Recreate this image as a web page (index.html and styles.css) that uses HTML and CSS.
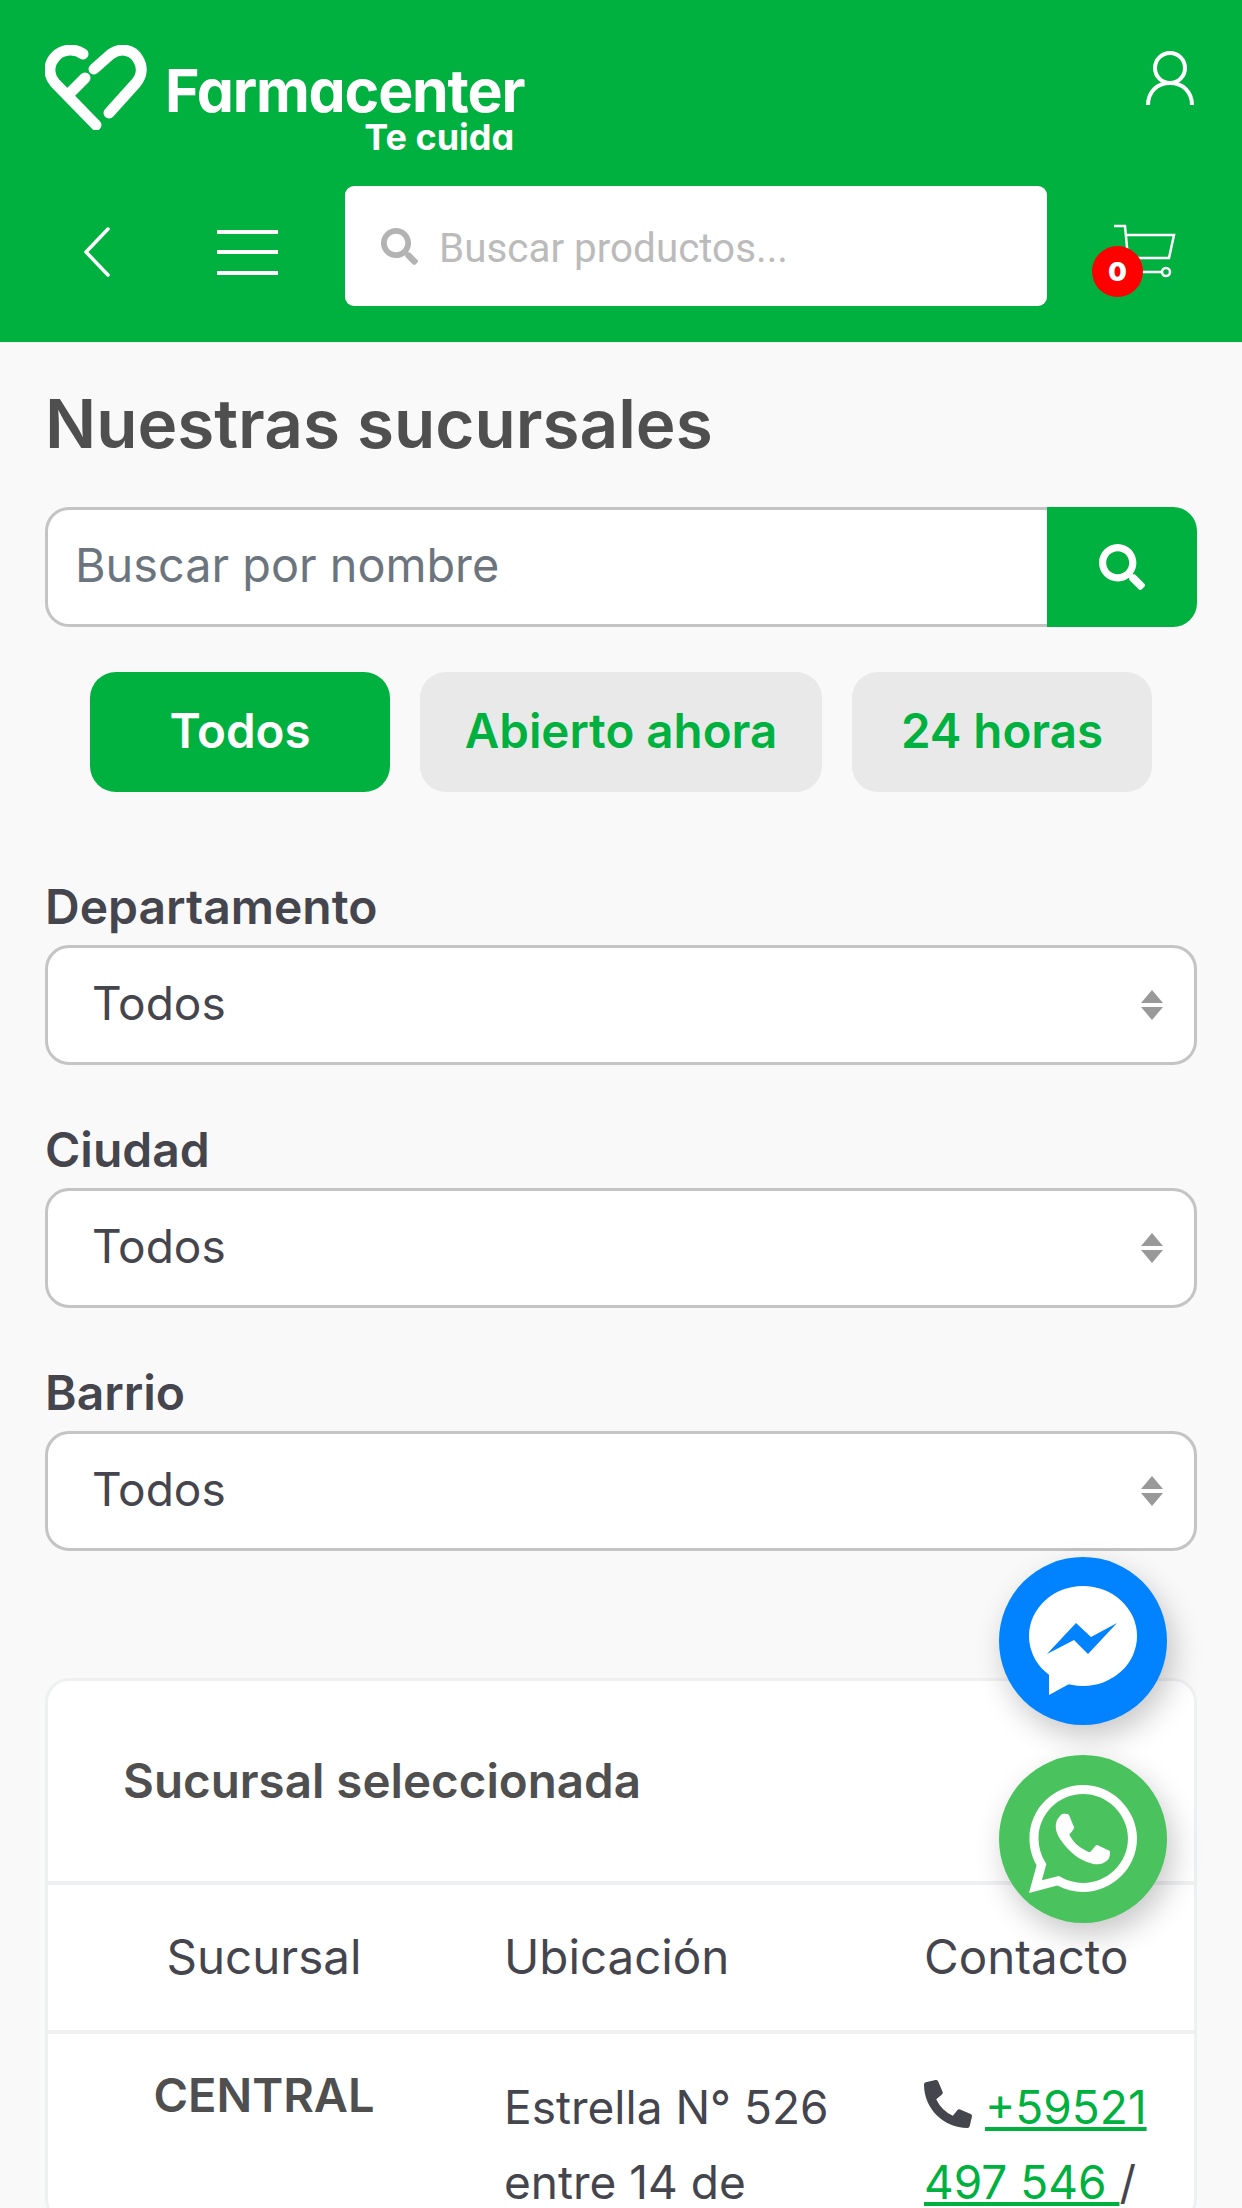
FILE: index.html
```html
<!DOCTYPE html>
<html lang="es">
<head>
  <meta charset="UTF-8" />
  <meta name="viewport" content="width=device-width, initial-scale=1.0"/>
  <title>Farmacenter - Nuestras sucursales</title>
  <link rel="stylesheet" href="styles.css">
</head>
<body>

<header class="site-header">
  <div class="header-top">
    <a class="logo" href="#">
      <svg class="logo-mark" viewBox="0 0 102 85" fill="none" stroke="#fff" stroke-width="11" stroke-linecap="round" stroke-linejoin="round">
        <path d="M38 9C30 3 18 4 11 11C3 19 3 30 10 38L51 80"/>
        <path d="M40 33L26 47"/>
        <path d="M49 24L66 9C76 2 88 5 93 14C98 22 97 31 91 38L64 68"/>
      </svg>
      <span class="logo-text">
        <span class="logo-name">Farmacenter</span>
        <span class="logo-tag">Te cuida</span>
      </span>
    </a>
    <a class="user-link" href="#">
      <svg viewBox="0 0 50 54" width="50" height="54" fill="none" stroke="#fff" stroke-width="4">
        <ellipse cx="25" cy="17" rx="15" ry="15"/>
        <path d="M3 54C3 41 12 32 25 32C38 32 47 41 47 54"/>
      </svg>
    </a>
  </div>
  <div class="header-bottom">
    <a class="back-link" href="#">
      <svg viewBox="0 0 28 50" width="28" height="50" fill="none" stroke="#fff" stroke-width="3.5" stroke-linecap="round" stroke-linejoin="round">
        <path d="M25 2L3 25L25 48"/>
      </svg>
    </a>
    <button class="menu-btn" type="button" aria-label="Menu"><span></span><span></span><span></span></button>
    <div class="top-search">
      <svg class="icon-search" viewBox="0 0 512 512"><path d="M505 442.7L405.3 343c-4.500-4.500-10.600-7-17-7H372c27.600-35.300 44-79.700 44-128C416 93.100 322.900 0 208 0S0 93.100 0 208s93.100 208 208 208c48.300 0 92.700-16.400 128-44v16.300c0 6.400 2.500 12.500 7 17l99.700 99.700c9.400 9.400 24.600 9.400 33.900 0l28.300-28.300c9.400-9.400 9.400-24.600.1-34zM208 336c-70.700 0-128-57.200-128-128 0-70.700 57.200-128 128-128 70.700 0 128 57.200 128 128 0 70.700-57.200 128-128 128z"/></svg>
      <input type="text" placeholder="Buscar productos...">
    </div>
    <a class="cart-link" href="#">
      <svg viewBox="0 0 62 54" width="62" height="54" fill="none" stroke="#fff" stroke-width="2.500">
        <path d="M0 2H11L14 34H55L60 11H12"/>
        <path d="M14 48H48"/>
        <circle cx="52" cy="48" r="4"/>
      </svg>
      <span class="cart-count">0</span>
    </a>
  </div>
</header>

<main class="content">
  <h1>Nuestras sucursales</h1>

  <div class="name-search">
    <input type="text" placeholder="Buscar por nombre">
    <button type="button" aria-label="Buscar">
      <svg viewBox="0 0 512 512"><path d="M505 442.7L405.3 343c-4.500-4.500-10.600-7-17-7H372c27.600-35.300 44-79.700 44-128C416 93.100 322.900 0 208 0S0 93.100 0 208s93.100 208 208 208c48.300 0 92.700-16.400 128-44v16.300c0 6.400 2.500 12.500 7 17l99.700 99.700c9.400 9.400 24.600 9.400 33.900 0l28.300-28.300c9.400-9.400 9.400-24.600.1-34zM208 336c-70.700 0-128-57.200-128-128 0-70.700 57.200-128 128-128 70.700 0 128 57.200 128 128 0 70.700-57.200 128-128 128z"/></svg>
    </button>
  </div>

  <div class="filters">
    <button class="filter filter-todos active" type="button">Todos</button>
    <button class="filter filter-abierto" type="button">Abierto ahora</button>
    <button class="filter filter-24" type="button">24 horas</button>
  </div>

  <label class="field-label" for="departamento">Departamento</label>
  <div class="select-wrap">
    <select id="departamento"><option>Todos</option></select>
    <svg class="select-arrows" viewBox="0 0 22 30"><path d="M11 0L22 13H0Z"/><path d="M0 17H22L11 30Z"/></svg>
  </div>

  <label class="field-label" for="ciudad">Ciudad</label>
  <div class="select-wrap">
    <select id="ciudad"><option>Todos</option></select>
    <svg class="select-arrows" viewBox="0 0 22 30"><path d="M11 0L22 13H0Z"/><path d="M0 17H22L11 30Z"/></svg>
  </div>

  <label class="field-label" for="barrio">Barrio</label>
  <div class="select-wrap">
    <select id="barrio"><option>Todos</option></select>
    <svg class="select-arrows" viewBox="0 0 22 30"><path d="M11 0L22 13H0Z"/><path d="M0 17H22L11 30Z"/></svg>
  </div>

  <section class="card">
    <h2 class="card-title">Sucursal seleccionada</h2>
    <table class="branches">
      <thead>
        <tr>
          <th class="col-name">Sucursal</th>
          <th class="col-place">Ubicación</th>
          <th class="col-contact">Contacto</th>
        </tr>
      </thead>
      <tbody>
        <tr>
          <td class="col-name branch-name">CENTRAL</td>
          <td class="col-place">Estrella N° 526 entre 14 de</td>
          <td class="col-contact">
            <svg class="icon-phone" viewBox="0 0 512 512"><path d="M497.390 361.800l-112-48a24 24 0 0 0-28 6.900l-49.600 60.600A370.660 370.660 0 0 1 130.600 204.110l60.600-49.600a23.940 23.940 0 0 0 6.900-28l-48-112A24.160 24.160 0 0 0 122.600.61l-104 24A24 24 0 0 0 0 48c0 256.500 207.900 464 464 464a24 24 0 0 0 23.400-18.600l24-104a24.290 24.290 0 0 0-14.010-27.600z"/></svg>
            <a href="#">+59521 497 546 </a>/
          </td>
        </tr>
      </tbody>
    </table>
  </section>
</main>

<div class="chat-buttons">
  <a class="chat-btn chat-messenger" href="#" aria-label="Messenger">
    <svg viewBox="0 0 168 168" width="168" height="168">
      <ellipse cx="84" cy="79" rx="54" ry="50" fill="#fff"/>
      <path d="M50 110V138L72 126Z" fill="#fff"/>
      <path d="M48 97L77 66L92 80L118 66L89 97L75 83Z" fill="#0183ff"/>
    </svg>
  </a>
  <a class="chat-btn chat-whatsapp" href="#" aria-label="WhatsApp">
    <svg viewBox="0 32 448 448" width="108" height="108" fill="#fff"><path d="M380.900 97.100C339 55.100 283.200 32 223.900 32c-122.400 0-222 99.600-222 222 0 39.100 10.200 77.300 29.600 111L0 480l117.700-30.900c32.400 17.700 68.900 27 106.100 27h.1c122.300 0 224.100-99.600 224.100-222 0-59.300-25.200-115-67.100-157zm-157 341.600c-33.200 0-65.700-8.900-94-25.700l-6.700-4-69.800 18.300L72 359.200l-4.400-7c-18.500-29.400-28.200-63.300-28.200-98.200 0-101.700 82.800-184.500 184.600-184.500 49.300 0 95.600 19.200 130.400 54.100 34.800 34.900 56.200 81.200 56.100 130.500 0 101.800-84.900 184.600-186.600 184.600zm101.200-138.200c-5.500-2.800-32.800-16.200-37.900-18-5.100-1.900-8.800-2.800-12.500 2.800-3.700 5.600-14.300 18-17.600 21.800-3.200 3.700-6.500 4.200-12 1.400-32.600-16.300-54-29.100-75.500-66-5.700-9.800 5.700-9.100 16.300-30.300 1.800-3.700.9-6.900-.5-9.700-1.400-2.800-12.500-30.100-17.100-41.200-4.500-10.800-9.100-9.300-12.500-9.500-3.200-.2-6.900-.2-10.600-.2-3.700 0-9.700 1.400-14.800 6.900-5.100 5.600-19.400 19-19.400 46.300 0 27.300 19.900 53.700 22.600 57.400 2.800 3.700 39.100 59.700 94.800 83.800 35.200 15.200 49 16.500 66.600 13.900 10.700-1.600 32.800-13.400 37.400-26.400 4.600-13 4.600-24.100 3.200-26.400-1.300-2.500-5-3.900-10.500-6.600z"/></svg>
  </a>
</div>

</body>
</html>
```

FILE: styles.css
```css
* {
  box-sizing: border-box;
}
html, body {
  height: 2208px;
  overflow: hidden;
}
body {
  margin: 0;
  background: #f9f9f9;
  color: #45454d;
  font-family: Inter, "Noto Sans", sans-serif;
}
a {
  color: inherit;
}

/* header */
.site-header {
  height: 342px;
  background: #00b140;
  padding: 45px 45px 0;
}
.header-top {
  height: 141px;
  display: flex;
  justify-content: space-between;
  align-items: flex-start;
}
.logo {
  display: flex;
  text-decoration: none;
  color: white;
}
.logo-mark {
  width: 102px;
  height: 85px;
  flex: none;
}
.logo-text {
  display: flex;
  flex-direction: column;
  align-items: flex-end;
  margin-left: 18px;
  padding-top: 18px;
}
.logo-name {
  font-size: 59px;
  font-weight: 700;
  line-height: 56px;
  letter-spacing: -1.2px;
  font-feature-settings: "cv11";
}
.logo-tag {
  font-size: 36px;
  font-weight: 700;
  line-height: 36px;
  margin-right: 10px;
  font-feature-settings: "cv11";
}
.user-link {
  display: block;
  margin-top: 6px;
  margin-right: 2px;
}
.header-bottom {
  display: flex;
  align-items: center;
  height: 120px;
}
.back-link {
  display: block;
  height: 50px;
  margin-top: 12px;
  margin-left: 38px;
}
.menu-btn {
  display: flex;
  flex-direction: column;
  justify-content: space-between;
  width: 61px;
  height: 45px;
  margin-top: 12px;
  margin-left: 106px;
  padding: 0;
  border: none;
  background: none;
}
.menu-btn span {
  height: 4px;
  background: white;
}
.top-search {
  display: flex;
  align-items: center;
  width: 702px;
  height: 120px;
  margin-left: 67px;
  padding-left: 36px;
  background: white;
  border-radius: 9px;
}
.icon-search {
  width: 37px;
  height: 37px;
  fill: #b3b3b3;
  flex: none;
}
.top-search input {
  flex: 1;
  min-width: 0;
  margin-left: 21px;
  padding: 4px 0 0;
  border: none;
  outline: none;
  background: none;
  font-family: Roboto, sans-serif;
  font-size: 40.4px;
}
.top-search input::placeholder {
  color: #bbb;
  opacity: 1;
}
.cart-link {
  position: relative;
  display: block;
  width: 62px;
  height: 54px;
  margin-top: 10px;
  margin-left: 67px;
}
.cart-count {
  position: absolute;
  left: -22px;
  top: 22px;
  width: 51px;
  height: 51px;
  border-radius: 50%;
  background: #f00;
  color: white;
  font-size: 26px;
  font-weight: 900;
  line-height: 51px;
  text-align: center;
}

/* main */
.content {
  padding: 0 45px;
}
h1 {
  margin: 47px 0 0;
  color: #4f4f4f;
  font-size: 67.4px;
  font-weight: 600;
  line-height: 70px;
}
.name-search {
  display: flex;
  height: 120px;
  margin-top: 48px;
}
.name-search input {
  flex: 1;
  min-width: 0;
  padding: 0 27px 4px;
  border: 3px solid #c4c4c4;
  border-right: none;
  border-radius: 24px 0 0 24px;
  background: white;
  outline: none;
  font-family: Inter, sans-serif;
  font-size: 46.8px;
  color: #6c757d;
}
.name-search input::placeholder {
  color: #6c757d;
  opacity: 1;
}
.name-search button {
  width: 150px;
  border: none;
  border-radius: 0 24px 24px 0;
  background: #00b140;
}
.name-search svg {
  width: 46px;
  height: 46px;
  fill: white;
  display: block;
  margin: auto;
}
.filters {
  display: flex;
  justify-content: center;
  gap: 30px;
  margin-top: 45px;
  margin-bottom: 88px;
}
.filter {
  height: 120px;
  padding: 0 0 3px;
  border: none;
  border-radius: 26px;
  background: #e9e9e9;
  color: #00b140;
  font-family: Inter, sans-serif;
  font-size: 47.5px;
  font-weight: 600;
}
.filter.active {
  background: #00b140;
  color: white;
}
.filter-todos { width: 300px; }
.filter-abierto { width: 402px; }
.filter-24 { width: 300px; }
.field-label {
  display: block;
  font-size: 48px;
  font-weight: 600;
  line-height: 54px;
}
.select-wrap {
  position: relative;
  margin-top: 11px;
  margin-bottom: 58px;
}
.select-wrap select {
  display: block;
  width: 100%;
  height: 120px;
  padding: 0 0 5px 44px;
  appearance: none;
  border: 3px solid #c4c4c4;
  border-radius: 24px;
  background: white;
  outline: none;
  font-family: Inter, sans-serif;
  font-size: 46px;
  color: #45454d;
}
.select-arrows {
  position: absolute;
  right: 34px;
  top: 45px;
  width: 22px;
  height: 30px;
  fill: #999;
  pointer-events: none;
}

/* card */
.card {
  margin-top: 127px;
  background: white;
  border: 3px solid #eff0f2;
  border-radius: 24px;
}
.card-title {
  margin: 0;
  height: 204px;
  padding: 73px 0 0 75px;
  border-bottom: 4px solid #eff0f2;
  color: #4f4f4f;
  font-size: 47.5px;
  font-weight: 600;
  line-height: 54px;
}
.branches {
  width: 100%;
  border-collapse: collapse;
  table-layout: fixed;
  font-size: 46px;
  line-height: 75px;
}
.branches th {
  height: 147px;
  padding: 0 0 2px;
  border-bottom: 4px solid #eff0f2;
  font-size: 47.5px;
  font-weight: 400;
  text-align: left;
}
.branches td {
  padding: 36px 0 0;
  vertical-align: top;
}
.col-place {
  width: 420px;
}
.col-contact {
  width: 270px;
}
.branches .col-name {
  padding-right: 24px;
  text-align: center;
}
.branches .branch-name {
  padding-top: 23px;
  color: #4f4f4f;
  font-size: 47px;
  font-weight: 600;
}
.branches td.col-contact {
  padding-right: 35px;
}
.branches a {
  color: #00b140;
}
.icon-phone {
  width: 48px;
  height: 48px;
  fill: #45454d;
  vertical-align: -4px;
}

/* floating chat buttons */
.chat-buttons {
  position: fixed;
  right: 75px;
  top: 1557px;
  display: flex;
  flex-direction: column;
  gap: 30px;
}
.chat-btn {
  display: flex;
  align-items: center;
  justify-content: center;
  width: 168px;
  height: 168px;
  border-radius: 50%;
  box-shadow: 6px 12px 30px rgba(0,0,0,0.22);
}
.chat-messenger {
  background: #0183ff;
}
.chat-whatsapp {
  background: #4ac25d;
}
```
